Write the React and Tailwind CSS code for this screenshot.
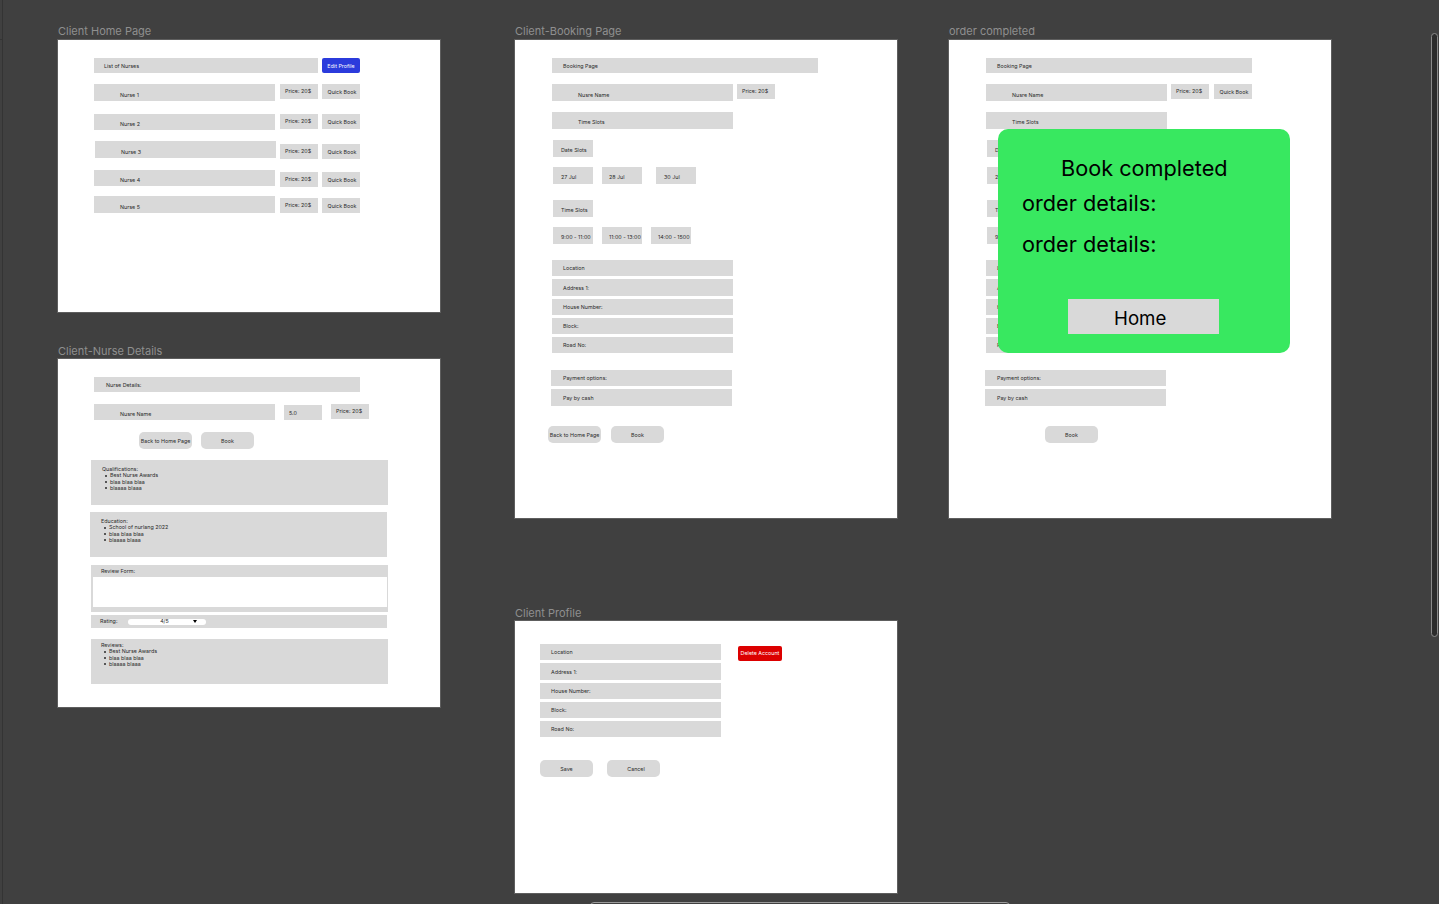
import React from "react";

function B({ className = "", tone = "bg-[#d9d9d9] text-[#2a2a2a]", children }) {
  return (
    <div className={"flex shrink-0 items-center overflow-hidden whitespace-nowrap text-[5.35px] leading-none " + tone + " " + className}>
      <span className="translate-y-[0.5px]">{children}</span>
    </div>
  );
}

function Frame({ className, label, labelGap, frame, children }) {
  return (
    <div className={"absolute w-[382px] " + className}>
      <div className={"h-[12px] text-[11px] leading-[12px] whitespace-nowrap text-[#8f8f8f] " + labelGap}>{label}</div>
      <div className={"relative w-[382px] bg-white shadow-[0_0_0_1px_#5e5e5e] " + frame}>{children}</div>
    </div>
  );
}

const P = ({ className = "" }) => <B className={"w-[38px] h-[15px] pl-[5px] pb-[1px] " + className}>Price: 20$</B>;
const Q = ({ className = "" }) => <B className={"w-[38px] h-[15px] justify-center pl-[2px] " + className}>Quick Book</B>;
const Pill = ({ className = "", children }) => (
  <B className={"w-[53px] h-[17px] justify-center rounded-[5px] " + className}>{children}</B>
);

function InfoList({ className, title, items }) {
  return (
    <div className={"shrink-0 bg-[#d9d9d9] text-[5.35px] leading-[6.4px] text-[#2a2a2a] " + className}>
      <div>{title}</div>
      <ul className="pl-[3px]">
        {items.map((t) => (
          <li key={t} className="flex items-center gap-[3px]">
            <span className="h-[2px] w-[2px] rounded-full bg-[#2a2a2a]" />
            {t}
          </li>
        ))}
      </ul>
    </div>
  );
}

function BookingTop({ quick }) {
  return (
    <>
      <B className="w-[266px] h-[15px] pl-[11px]">Booking Page</B>
      <div className="mt-[11px] flex items-start">
        <B className="w-[181px] h-[17px] pl-[26px] pt-[4px]">Nusre Name</B>
        <P className="ml-[4px]" />
        {quick && <Q className="ml-[5px]" />}
      </div>
      <B className="mt-[11px] w-[181px] h-[17px] pl-[26px] pt-[3px]">Time Slots</B>
      <B className="mt-[11px] ml-[1px] w-[40px] h-[17px] pl-[8px] pt-[3px]">Date Slots</B>
      <div className="mt-[10px] ml-[1px] flex">
        <B className="w-[40px] h-[17px] pl-[8px] pt-[3px]">27 Jul</B>
        <B className="ml-[9px] w-[40px] h-[17px] pl-[7px] pt-[3px]">28 Jul</B>
        <B className="ml-[14px] w-[40px] h-[17px] pl-[8px] pt-[3px]">30 Jul</B>
      </div>
      <B className="mt-[16px] ml-[1px] w-[40px] h-[17px] pl-[8px] pt-[3px]">Time Slots</B>
      <div className="mt-[10px] ml-[1px] flex">
        <B className="w-[40px] h-[17px] pl-[8px] pt-[3px]">9:00 - 11:00</B>
        <B className="ml-[9px] w-[40px] h-[17px] pl-[7px] pt-[3px]">11:00 - 13:00</B>
        <B className="ml-[9px] w-[40px] h-[17px] pl-[7px] pt-[3px]">14:00 - 1500</B>
      </div>
    </>
  );
}

function Address() {
  return (
    <>
      <B className="w-[181px] h-[16px] pl-[11px]">Location</B>
      <B className="mt-[3px] w-[181px] h-[17px] pl-[11px]">Address 1:</B>
      <B className="mt-[3px] w-[181px] h-[16px] pl-[11px]">House Number:</B>
      <B className="mt-[3px] w-[181px] h-[16px] pl-[11px]">Block:</B>
      <B className="mt-[3px] w-[181px] h-[16px] pl-[11px]">Road No:</B>
    </>
  );
}

function Payment() {
  return (
    <>
      <B className="mt-[17px] -ml-[1px] w-[181px] h-[16px] pl-[12px]">Payment options:</B>
      <B className="mt-[3px] -ml-[1px] w-[181px] h-[17px] pl-[12px]">Pay by cash</B>
    </>
  );
}

export default function App() {
  return (
    <div className="relative h-[904px] w-[1439px] overflow-hidden bg-[#404040] font-[Inter,sans-serif]">
      {/* Left edge of the canvas */}
      <div className="absolute left-0 top-0 h-full w-[3px] border-r border-[#343434]" />
      <div className="absolute left-0 top-[39px] h-px w-[3px] bg-[#343434]" />

      {/* Client Home Page */}
      <Frame className="left-[58px] top-[25px]" label="Client Home Page" labelGap="mb-[3px]" frame="h-[272px] pl-[36px] pt-[18px]">
        <div className="flex gap-[4px]">
          <B className="w-[224px] h-[15px] pl-[10px]">List of Nurses</B>
          <B tone="bg-[#2b3bdc] text-white" className="w-[38px] h-[15px] justify-center rounded-[2px]">Edit Profile</B>
        </div>
        <div className="mt-[11px] flex items-start">
          <B className="w-[181px] h-[17px] pl-[26px] pt-[4px]">Nurse 1</B>
          <P className="ml-[5px]" />
          <Q className="ml-[4px]" />
        </div>
        <div className="mt-[13px] flex items-start">
          <B className="w-[181px] h-[16px] pl-[26px] pt-[3px]">Nurse 2</B>
          <P className="ml-[5px]" />
          <Q className="ml-[4px]" />
        </div>
        <div className="mt-[11px] flex items-start">
          <B className="ml-[1px] w-[181px] h-[17px] pl-[26px] pt-[4px]">Nurse 3</B>
          <P className="ml-[4px] mt-[3px]" />
          <Q className="ml-[4px] mt-[3px]" />
        </div>
        <div className="mt-[11px] flex items-start">
          <B className="w-[181px] h-[16px] pl-[26px] pt-[4px]">Nurse 4</B>
          <P className="ml-[5px] mt-[2px]" />
          <Q className="ml-[4px] mt-[2px]" />
        </div>
        <div className="mt-[9px] flex items-start">
          <B className="w-[181px] h-[17px] pl-[26px] pt-[4px]">Nurse 5</B>
          <P className="ml-[5px] mt-[2px]" />
          <Q className="ml-[4px] mt-[2px]" />
        </div>
      </Frame>

      {/* Client-Nurse Details */}
      <Frame className="left-[58px] top-[345px]" label="Client-Nurse Details" labelGap="mb-[2px]" frame="h-[348px] pl-[36px] pt-[18px]">
        <B className="w-[266px] h-[15px] pl-[12px]">Nurse Details:</B>
        <div className="mt-[12px] flex items-start">
          <B className="w-[181px] h-[16px] pl-[26px] pt-[4px]">Nusre Name</B>
          <B className="ml-[9px] mt-[1px] w-[38px] h-[15px] pl-[5px]">5.0</B>
          <P className="ml-[9px]" />
        </div>
        <div className="mt-[12px] ml-[45px] flex gap-[9px]">
          <Pill>Back to Home Page</Pill>
          <Pill>Book</Pill>
        </div>
        <InfoList
          className="mt-[11px] -ml-[3px] w-[297px] h-[45px] pl-[11px] pt-[6px]"
          title="Qualifications:"
          items={["Best Nurse Awards", "blaa blaa blaa", "blaaaa blaaa"]}
        />
        <InfoList
          className="mt-[7px] -ml-[4px] w-[297px] h-[45px] pl-[11px] pt-[6px]"
          title="Education:"
          items={["School of nurlang 2022", "blaa blaa blaa", "blaaaa blaaa"]}
        />
        <div className="mt-[8px] -ml-[3px] flex h-[47px] w-[297px] flex-col bg-[#d9d9d9]">
          <div className="h-[12px] pl-[10px] text-[5.35px] leading-[12px] text-[#2a2a2a]">Review Form:</div>
          <div className="ml-[2px] h-[30px] w-[294px] bg-white" />
        </div>
        <div className="mt-[3px] -ml-[3px] flex h-[13px] w-[296px] items-center bg-[#d9d9d9] pl-[9px] text-[5.35px] leading-none text-[#2a2a2a]">
          <span className="w-[28px]">Rating:</span>
          <div className="relative flex h-[6px] w-[78px] items-center justify-center rounded-[3px] bg-white">
            <span className="-ml-[5px]">4/5</span>
            <svg className="absolute left-[65px] top-[1.5px]" width="4" height="3" viewBox="0 0 4 3">
              <path d="M0 0H4L2 3Z" fill="#000" />
            </svg>
          </div>
        </div>
        <InfoList
          className="mt-[11px] -ml-[3px] w-[297px] h-[45px] pl-[10px] pt-[3px]"
          title="Reviews:"
          items={["Best Nurse Awards", "blaa blaa blaa", "blaaaa blaaa"]}
        />
      </Frame>

      {/* Client-Booking Page */}
      <Frame className="left-[515px] top-[25px]" label="Client-Booking Page" labelGap="mb-[3px]" frame="h-[478px] pl-[37px] pt-[18px]">
        <BookingTop />
        <div className="mt-[16px]">
          <Address />
        </div>
        <Payment />
        <div className="mt-[20px] -ml-[4px] flex gap-[10px]">
          <Pill>Back to Home Page</Pill>
          <Pill>Book</Pill>
        </div>
      </Frame>

      {/* order completed */}
      <Frame className="left-[949px] top-[25px]" label="order completed" labelGap="mb-[3px]" frame="h-[478px] pl-[37px] pt-[18px]">
        <BookingTop quick />
        <div className="mt-[16px]">
          <Address />
        </div>
        <Payment />
        <Pill className="mt-[20px] ml-[59px]">Book</Pill>

        <div className="absolute left-[49px] top-[89px] flex h-[224px] w-[292px] flex-col rounded-[10px] bg-[#38e860] text-[21.7px] leading-[30px] text-black">
          <div className="ml-[63px] mt-[24px]">Book completed</div>
          <div className="ml-[24px] mt-[5px]">order details:</div>
          <div className="ml-[24px] mt-[11px]">order details:</div>
          <div className="ml-[70px] mt-[40px] flex h-[35px] w-[151px] items-center bg-[#d9d9d9] pl-[46px] pt-[5px] text-[18.7px]">
            Home
          </div>
        </div>
      </Frame>

      {/* Client Profile */}
      <Frame className="left-[515px] top-[607px]" label="Client Profile" labelGap="mb-[2px]" frame="h-[272px] pl-[25px] pt-[23px]">
        <div className="flex items-start">
          <div>
            <Address />
          </div>
          <B tone="bg-[#dc0000] text-white" className="ml-[17px] mt-[2px] w-[44px] h-[15px] justify-center rounded-[2px] pb-[1px]">Delete Account</B>
        </div>
        <div className="mt-[23px] flex gap-[14px]">
          <Pill>Save</Pill>
          <Pill className="pl-[5px]">Cancel</Pill>
        </div>
      </Frame>

      {/* Canvas scrollbar and the panel peeking in from below */}
      <div className="absolute left-[1431px] top-[33px] h-[604px] w-[7px] rounded-full border border-[#8a8a8a] bg-[#2c2c2c]" />
      <div className="absolute left-[590px] top-[902px] h-[10px] w-[420px] rounded-t-[4px] border border-[#9a9a9a] bg-[#404040]" />
    </div>
  );
}
